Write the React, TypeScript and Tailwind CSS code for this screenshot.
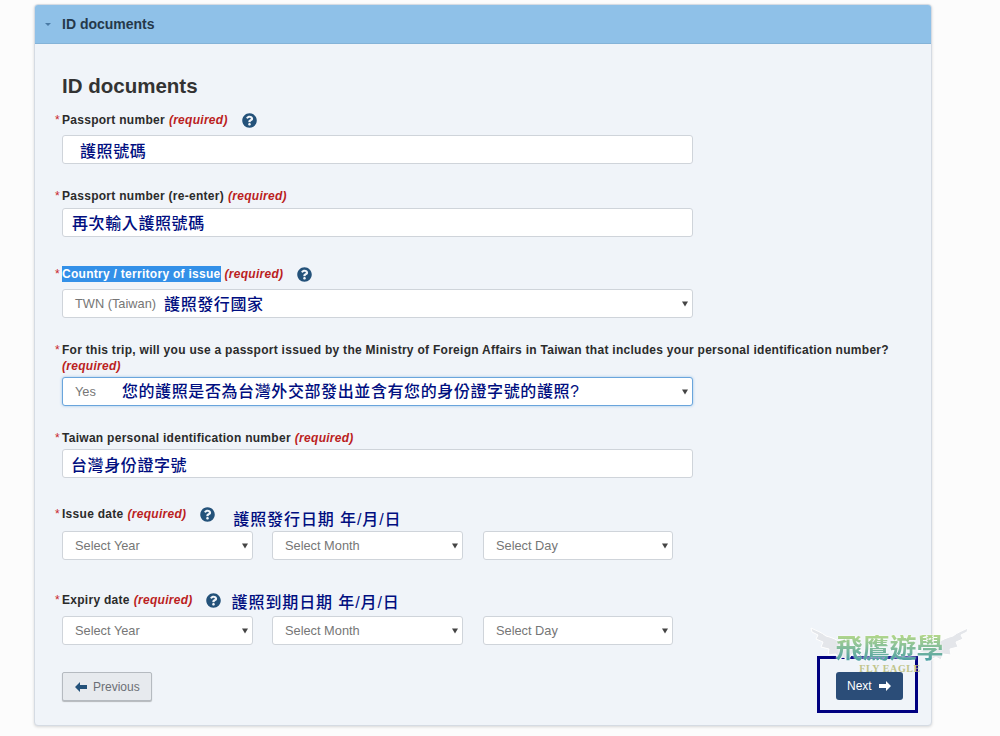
import type { ReactNode } from 'react'
import { FaQuestionCircle } from 'react-icons/fa'

const sans = '[font-family:"Liberation_Sans","Noto_Sans_CJK_TC",sans-serif]'

function Caret() {
  return <span className="absolute right-[4px] top-1/2 -translate-y-1/2 border-x-[3px] border-t-[5px] border-x-transparent border-t-[#444]" />
}

function Help({ className = '' }: { className?: string }) {
  return <FaQuestionCircle className={`text-[15px] text-[#24527a] ${className}`} />
}

function Label({ text, help, note, highlight }: { text: string; help?: string; note?: ReactNode; highlight?: boolean }) {
  return (
    <div className="relative h-[16px] text-[12px] font-bold leading-[16px] tracking-[0.28px] text-[#2b2b2b]">
      <span className="absolute left-[-7px] top-0 font-normal text-[#c9252b]">*</span>
      <div className="flex items-center">
        <span className={highlight ? 'bg-[#3390e8] text-white' : ''}>{text}</span>
        <span className="ml-[4px] italic text-[#bb1e1e]">(required)</span>
        {help && <Help className={help} />}
        {note}
      </div>
    </div>
  )
}

// blue annotations laid over the form
function Note({ children, className }: { children: ReactNode; className: string }) {
  return <span className={`text-[16px] font-medium leading-[16px] text-[#000e80] ${className}`}>{children}</span>
}

function TextBox({ children, focus }: { children: ReactNode; focus?: boolean }) {
  return (
    <div className={`relative flex h-[29px] w-[631px] items-center rounded-[3px] border bg-white ${focus ? 'border-[#6aa5dc] shadow-[0_0_3px_#9cc4e8]' : 'border-[#cfd4da]'}`}>
      {children}
    </div>
  )
}

function DateSelect({ label, className = '' }: { label: string; className?: string }) {
  return (
    <div className={`relative flex h-[29px] items-center rounded-[3px] border border-[#cfd4da] bg-white pl-[12px] text-[12.8px] text-[#767676] ${className}`}>
      {label}
      <Caret />
    </div>
  )
}

function DateRow({ className }: { className: string }) {
  return (
    <div className={`flex ${className}`}>
      <DateSelect label="Select Year" className="w-[191px]" />
      <DateSelect label="Select Month" className="ml-[19px] w-[191px]" />
      <DateSelect label="Select Day" className="ml-[20px] w-[190px]" />
    </div>
  )
}

function Arrow({ left, className }: { left?: boolean; className: string }) {
  return (
    <svg viewBox="0 0 12 10" className={`h-[10px] w-[12px] ${className}`} fill="currentColor">
      <path d={left ? 'M0 5 5 0v3h7v4H5v3z' : 'M12 5 7 0v3H0v4h7v3z'} />
    </svg>
  )
}

function Wing({ flip }: { flip?: boolean }) {
  return (
    <svg viewBox="0 0 54 38" className={`h-[38px] w-[54px] ${flip ? '-scale-x-100' : ''}`} fill="#e4e6ea" stroke="#fff" strokeWidth="1">
      <path d="M2 1c6 3 10 4 15 8 8 2 16 6 22 12l14 3-10 3-4 6-5-3-5 3-2-6-8 1 1-6-8-2 2-5-7-3 2-4-6-3z" />
    </svg>
  )
}

export default function App() {
  return (
    <div className={`h-[736px] overflow-hidden bg-[#fcfcfc] pl-[34px] pt-[4px] ${sans}`}>
      <div className="w-[898px] overflow-hidden rounded-[4px] border border-[#d5dbe3] bg-[#f0f4f9] shadow-[0_1px_3px_rgba(0,0,0,0.15)]">
        {/* Header */}
        <div className="flex h-[39px] items-center border-b border-[#84b3d8] bg-[#8fc1e8] pl-[10px]">
          <span className="border-x-[3px] border-t-[3px] border-x-transparent border-t-[#4a7ba5]" />
          <span className="ml-[11px] text-[14px] font-bold text-[#25384a]">ID documents</span>
        </div>

        <div className="px-[27px]">
          <h2 className="mt-[29px] text-[20.5px] font-bold leading-[26px] text-[#333]">ID documents</h2>

          <div className="mt-[13px]">
            <Label text="Passport number" help="ml-[14px]" />
          </div>
          <div className="mt-[7px]">
            <TextBox><Note className="ml-[17px] translate-y-[2px] tracking-[0.6px]">護照號碼</Note></TextBox>
          </div>

          <div className="mt-[24px]"><Label text="Passport number (re-enter)" /></div>
          <div className="mt-[4px]">
            <TextBox><Note className="ml-[9px] translate-y-[1px] tracking-[0.6px]">再次輸入護照號碼</Note></TextBox>
          </div>

          <div className="mt-[29px]"><Label text="Country / territory of issue" help="ml-[14px]" highlight /></div>
          <div className="mt-[7px]">
            <TextBox>
              <span className="ml-[12px] text-[12.8px] text-[#767676]">TWN (Taiwan)</span>
              <Note className="ml-[8px] translate-y-[1px] tracking-[0.6px]">護照發行國家</Note>
              <Caret />
            </TextBox>
          </div>

          <div className="mt-[24px] text-[12px] font-bold leading-[16px] tracking-[0.28px] text-[#2b2b2b]">
            <div className="relative">
              <span className="absolute left-[-7px] top-0 font-normal text-[#c9252b]">*</span>
              For this trip, will you use a passport issued by the Ministry of Foreign Affairs in Taiwan that includes your personal identification number?
            </div>
            <div className="italic text-[#bb1e1e]">(required)</div>
          </div>
          <div className="mt-[3px]">
            <TextBox focus>
              <span className="ml-[12px] text-[12.8px] text-[#767676]">Yes</span>
              <Note className="ml-[26px] tracking-[0.6px]">您的護照是否為台灣外交部發出並含有您的身份證字號的護照?</Note>
              <Caret />
            </TextBox>
          </div>

          <div className="mt-[24px]"><Label text="Taiwan personal identification number" /></div>
          <div className="mt-[3px]">
            <TextBox><Note className="ml-[8px] translate-y-[2px] tracking-[0.6px]">台灣身份證字號</Note></TextBox>
          </div>

          <div className="mt-[28px]">
            <Label text="Issue date" help="ml-[14px]" note={<Note className="ml-[18px] translate-y-[6px] tracking-[0.9px]">護照發行日期 年/月/日</Note>} />
          </div>
          <DateRow className="mt-[9px]" />

          <div className="mt-[32px]">
            <Label text="Expiry date" help="ml-[13px]" note={<Note className="ml-[11px] translate-y-[3px] tracking-[0.9px]">護照到期日期 年/月/日</Note>} />
          </div>
          <DateRow className="mt-[8px]" />

          {/* Footer buttons */}
          <div className="mb-[24px] mt-[27px] flex items-start justify-between pr-[1px]">
            <button className="flex h-[29px] w-[90px] items-center rounded-[2px] border border-[#b5bac0] bg-[#e7eaee] pl-[12px] text-[12px] text-[#6b6f75] shadow-[0_1px_1px_rgba(0,0,0,0.25)]">
              <Arrow left className="text-[#24527a]" />
              <span className="ml-[6px]">Previous</span>
            </button>
            <div className="relative">
              <button className="flex h-[28px] w-[67px] items-center rounded-[3px] bg-[#2b4d78] pl-[11px] text-[12px] text-white">
                Next
                <Arrow className="ml-[7px] text-white" />
              </button>
              <div className="absolute left-[-19px] top-[-16px] h-[57px] w-[101px] border-[3px] border-[#000080]" />
            </div>
          </div>
        </div>
      </div>

      {/* Watermark */}
      <div className="absolute left-[809px] top-[627px] flex h-[50px] w-[161px] justify-between">
        <Wing />
        <Wing flip />
        <div className="absolute left-0 right-0 top-[8px] bg-gradient-to-b from-[#b4d88a] to-[#3f9aa5] bg-clip-text text-center text-[27px] font-bold leading-[28px] text-transparent drop-shadow-[0_0_1px_#ffffff]">飛鷹遊學</div>
        <div className="absolute left-[1px] right-0 top-[36px] text-center text-[10px] font-bold leading-[12px] tracking-[0.6px] text-[#c0c48a] [font-family:'Liberation_Serif',serif]">FLY EAGLE</div>
      </div>
    </div>
  )
}
